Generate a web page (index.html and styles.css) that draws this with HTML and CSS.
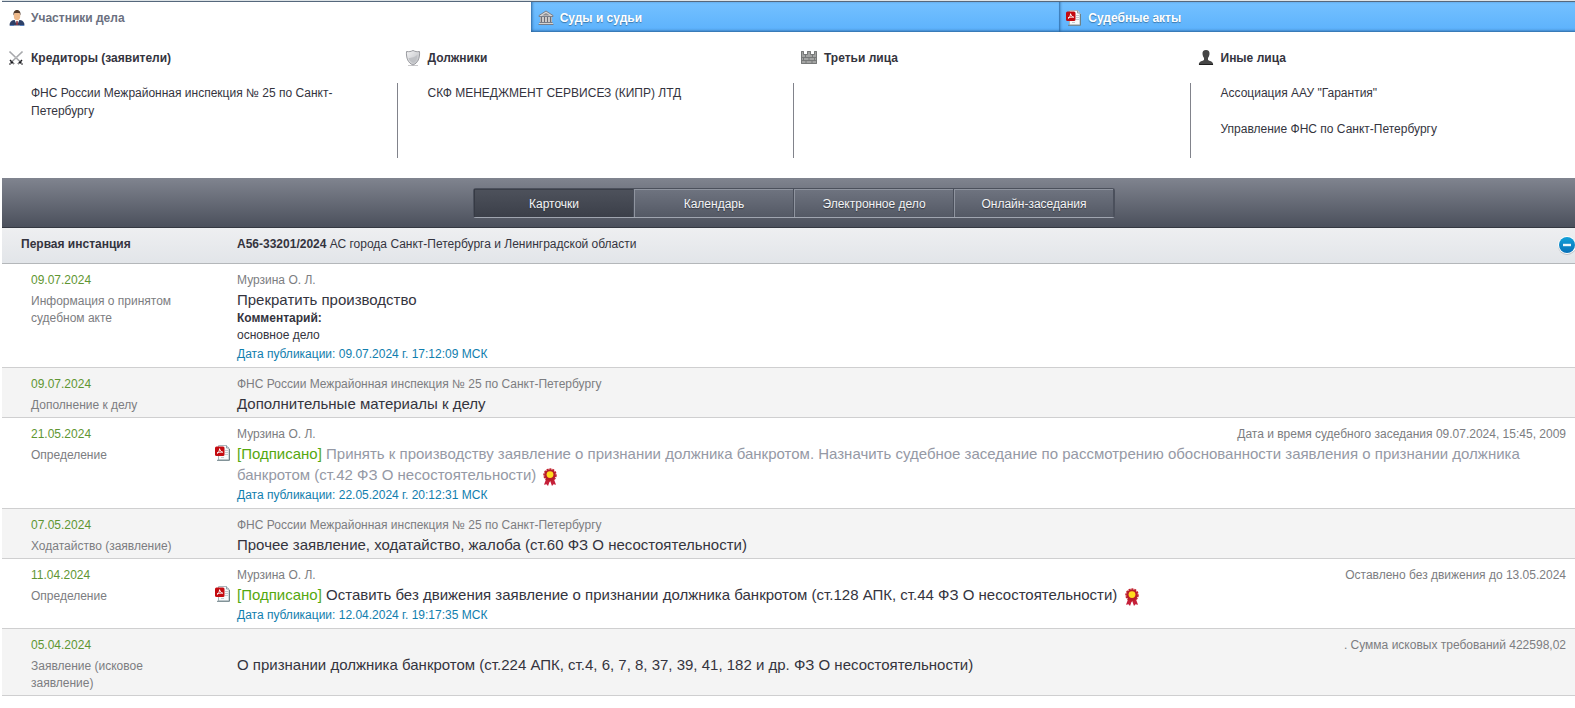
FILE: index.html
```html
<!DOCTYPE html>
<html lang="ru">
<head>
<meta charset="utf-8">
<title>А56-33201/2024</title>
<link rel="stylesheet" href="styles.css">
</head>
<body>
<svg class="defs" width="0" height="0" aria-hidden="true">
  <defs>
    <linearGradient id="steel" x1="0" y1="0" x2="1" y2="1"><stop offset="0" stop-color="#f4f4f5"/><stop offset="1" stop-color="#b9bbc0"/></linearGradient>
    <linearGradient id="blue" x1="0" y1="0" x2="0" y2="1"><stop offset="0" stop-color="#12a0d8"/><stop offset="1" stop-color="#0871b8"/></linearGradient>
  </defs>
  <symbol id="pdf" viewBox="0 0 16 16">
    <path d="M3.500 .5h8l2.500 2.500v12h-10.500z" fill="#f7f9fa" stroke="#a9b6bc"/>
    <path d="M11.500 .5v2.500h2.500" fill="#dfe6e9" stroke="#8fa0a8"/>
    <path d="M10 5.500h3M10 7.500h3M10 9.500h3M6 12.500h3" stroke="#c3cad0"/>
    <path d="M2 15.300h12.500V4" fill="none" stroke="#6d8188"/>
    <rect x="0" y="1.500" width="9.500" height="9.500" rx="1.500" fill="#c40a10"/>
    <path d="M2 8.200C3.500 7.500 4.600 5.500 4.600 3.700C4.900 5.400 6 6.700 7.700 7.200C5.700 6.900 3.700 7.200 2 8.200z" fill="none" stroke="#fff" stroke-width="1"/>
  </symbol>
  <symbol id="rosette" viewBox="0 0 14 18">
    <path d="M3.500 10L1 16.800l2.500-.6L5 18l2-5.500L9 18l1.500-1.800L13 16.800l-2.500-6.800z" fill="#c5203a"/>
    <circle cx="7" cy="7" r="6" fill="none" stroke="#c5202c" stroke-width="1.500" stroke-dasharray="2 1"/>
    <circle cx="7" cy="7" r="5.800" fill="#b71c2b"/>
    <circle cx="7" cy="6.600" r="3.400" fill="#ffdc1e"/>
  </symbol>
</svg>
<main class="page">
  <nav class="tabs">
    <button class="tab tab-active" type="button">
      <svg class="icon" viewBox="0 0 16 16"><path d="M.5 15.500c0-3.500 1.500-5 4.500-5.500h6c3 .5 4.500 2 4.500 5.500z" fill="#2d4068"/><path d="M5.500 9.500h5l-2.500 6z" fill="#fff"/><path d="M7.300 11h1.400l.5 4H6.800z" fill="#8a3440"/><path d="M1 15.500h4M11 15.500h4" stroke="#5b83c0"/><ellipse cx="8" cy="6" rx="3.200" ry="4.300" fill="#eeb98a"/><path d="M4.500 5.500C4 1.500 6 0 8 0s4 1.500 3.500 5.500L10.500 3h-5z" fill="#503828"/></svg>
      <span>Участники дела</span>
    </button>
    <button class="tab" type="button">
      <svg class="icon" viewBox="0 0 16 16"><path d="M8 1L15 5.500v1H1v-1z" fill="#d6d5d4" stroke="#7a7f8a"/><path d="M8 3l4 2.500H4z" fill="#8c8d92"/><path d="M2 7h12v6H2z" fill="#b5b3b4"/><path d="M3.500 7v6M6.500 7v6M9.500 7v6M12.500 7v6" stroke="#6d6d74"/><path d="M5 7v6M8 7v6M11 7v6" stroke="#e2e0de"/><path d="M1.500 12.500h13M.5 14.500h15" stroke="#777c87"/><path d="M1 13.500h14" stroke="#d5d3d0"/></svg>
      <span>Суды и судьи</span>
    </button>
    <button class="tab" type="button">
      <svg class="icon"><use href="#pdf"/></svg>
      <span>Судебные акты</span>
    </button>
  </nav>

  <section class="parties">
    <div class="party">
      <h2 class="party-title">
        <svg class="icon" viewBox="0 0 16 16"><path d="M1.500 1.500L13 12.500M14.500 1.500L3 12.500" stroke="#8c8e92" stroke-width="1.500"/><path d="M1.500 1l9.500 9.500M14.500 1l-9.500 9.500" stroke="#e8e8ea" stroke-width=".6"/><path d="M2 10l4 4M14 10l-4 4M4 12l-2.500 2.500M12 12l2.500 2.500" stroke="#1c1c20" stroke-width="1.500" stroke-dasharray="2 .5"/></svg>
        Кредиторы (заявители)
      </h2>
      <ul class="party-list"><li>ФНС России Межрайонная инспекция № 25 по Санкт-Петербургу</li></ul>
    </div>
    <div class="party">
      <h2 class="party-title">
        <svg class="icon" viewBox="0 0 16 16"><path d="M3 15.500h10" stroke="#c9c9cb"/><path d="M1.500 1.500C4 2 6 1.500 8 .5c2 1 4 1.500 6.500 1C15 8 13 13 8 15C3 13 1 8 1.500 1.500z" fill="url(#steel)" stroke="#9a9ba0"/><path d="M3.500 8C6 8 11 7 12.500 4.500C12.500 9 11 12 8 13C5.500 12 4 10 3.500 8z" fill="#bfc1c5"/></svg>
        Должники
      </h2>
      <ul class="party-list"><li>СКФ МЕНЕДЖМЕНТ СЕРВИСЕЗ (КИПР) ЛТД</li></ul>
    </div>
    <div class="party">
      <h2 class="party-title">
        <svg class="icon" viewBox="0 0 16 16"><path d="M0 1h3v3h3V1h4v3h3V1h3v13H0z" fill="#a3a4a3"/><path d="M.5 1.500h2v3h4v-3h3v3h4v-3h2v12H.5zM0 7.500h16M0 10.500h16M4.500 4.500v3M11.500 4.500v3M2.500 7.500v3M8 7.500v3M13.500 7.500v3M5 10.500v3M11 10.500v3" fill="none" stroke="#777979"/></svg>
        Третьи лица
      </h2>
      <ul class="party-list"></ul>
    </div>
    <div class="party">
      <h2 class="party-title">
        <svg class="icon" viewBox="0 0 16 16"><path d="M8 0c2.500 0 3.700 1.500 3.500 4C11.300 6 10.500 7 10 8v2c1 1 5 1 5.200 4.500c-3 .7-11.400 .7-14.400 0C1 11 5 11 6 10V8C5.500 7 4.700 6 4.500 4C4.300 1.500 5.500 0 8 0z" fill="#464646"/><path d="M1 14.500h14" stroke="#1f1f1f"/></svg>
        Иные лица
      </h2>
      <ul class="party-list"><li>Ассоциация ААУ "Гарантия"</li><li>Управление ФНС по Санкт-Петербургу</li></ul>
    </div>
  </section>

  <nav class="toolbar">
    <div class="switch">
      <button class="switch-item switch-on" type="button">Карточки</button>
      <button class="switch-item" type="button">Календарь</button>
      <button class="switch-item" type="button">Электронное дело</button>
      <button class="switch-item" type="button">Онлайн-заседания</button>
    </div>
  </nav>

  <header class="instance">
    <strong>Первая инстанция</strong>
    <span><strong>А56-33201/2024</strong> АС города Санкт-Петербурга и Ленинградской области</span>
    <button class="collapse" type="button" aria-label="Свернуть">
      <svg viewBox="0 0 20 20"><circle cx="10" cy="11" r="9" fill="#bfc3c7"/><circle cx="10" cy="10" r="9" fill="#fff"/><circle cx="10" cy="10" r="8" fill="url(#blue)"/><path d="M6 10h8" stroke="#eef6fb" stroke-width="2.400"/></svg>
    </button>
  </header>

  <article class="row">
    <div class="kind"><time>09.07.2024</time><p>Информация о принятом судебном акте</p></div>
    <div class="body">
      <div class="meta"><span>Мурзина О. Л.</span></div>
      <h3 class="title">Прекратить производство</h3>
      <p class="comment"><strong>Комментарий:</strong><br>основное дело</p>
      <p class="published">Дата публикации: 09.07.2024 г. 17:12:09 МСК</p>
    </div>
  </article>

  <article class="row row-alt">
    <div class="kind"><time>09.07.2024</time><p>Дополнение к делу</p></div>
    <div class="body">
      <div class="meta"><span>ФНС России Межрайонная инспекция № 25 по Санкт-Петербургу</span></div>
      <h3 class="title">Дополнительные материалы к делу</h3>
    </div>
  </article>

  <article class="row">
    <div class="kind"><time>21.05.2024</time><p>Определение</p></div>
    <svg class="icon doc"><use href="#pdf"/></svg>
    <div class="body">
      <div class="meta"><span>Мурзина О. Л.</span><span>Дата и время судебного заседания 09.07.2024, 15:45, 2009</span></div>
      <h3 class="title"><span class="signed">[Подписано]</span> <a class="visited" href="#">Принять к производству заявление о признании должника банкротом. Назначить судебное заседание по рассмотрению обоснованности заявления о признании должника банкротом (ст.42 ФЗ О несостоятельности)</a> <svg class="seal"><use href="#rosette"/></svg></h3>
      <p class="published">Дата публикации: 22.05.2024 г. 20:12:31 МСК</p>
    </div>
  </article>

  <article class="row row-alt">
    <div class="kind"><time>07.05.2024</time><p>Ходатайство (заявление)</p></div>
    <div class="body">
      <div class="meta"><span>ФНС России Межрайонная инспекция № 25 по Санкт-Петербургу</span></div>
      <h3 class="title">Прочее заявление, ходатайство, жалоба (ст.60 ФЗ О несостоятельности)</h3>
    </div>
  </article>

  <article class="row">
    <div class="kind"><time>11.04.2024</time><p>Определение</p></div>
    <svg class="icon doc"><use href="#pdf"/></svg>
    <div class="body">
      <div class="meta"><span>Мурзина О. Л.</span><span>Оставлено без движения до 13.05.2024</span></div>
      <h3 class="title"><span class="signed">[Подписано]</span> <a href="#">Оставить без движения заявление о признании должника банкротом (ст.128 АПК, ст.44 ФЗ О несостоятельности)</a> <svg class="seal"><use href="#rosette"/></svg></h3>
      <p class="published">Дата публикации: 12.04.2024 г. 19:17:35 МСК</p>
    </div>
  </article>

  <article class="row row-alt">
    <div class="kind"><time>05.04.2024</time><p>Заявление (исковое заявление)</p></div>
    <div class="body">
      <div class="meta"><span></span><span>. Сумма исковых требований 422598,02</span></div>
      <h3 class="title">О признании должника банкротом (ст.224 АПК, ст.4, 6, 7, 8, 37, 39, 41, 182 и др. ФЗ О несостоятельности)</h3>
    </div>
  </article>
</main>
</body>
</html>
```
FILE: styles.css
```css
* {
  box-sizing: border-box;
}

body {
  margin: 0;
  overflow: hidden;
  background: #fff;
  color: #34343e;
  font: 12px/17px "Liberation Sans", Arial, sans-serif;
}

h2, h3, p, ul {
  margin: 0;
  padding: 0;
  font-size: inherit;
  font-weight: inherit;
}

button {
  margin: 0;
  border: 0;
  background: none;
  color: inherit;
  font: inherit;
  cursor: pointer;
}

a {
  color: inherit;
  text-decoration: none;
}

.defs {
  position: absolute;
}

.icon {
  flex: none;
  width: 16px;
  height: 16px;
}

/* The sheet runs past the right edge of the window */
.page {
  margin: 0 -13px 0 2px;
}

.tabs {
  display: grid;
  grid-template-columns: repeat(3, 1fr);
  border-top: 1px solid #dde3e6;
}

.tab {
  display: flex;
  align-items: center;
  gap: 6px;
  height: 31px;
  padding: 2px 7px 0;
  border-top: 1px solid #56687c;
  background: linear-gradient(#74c1ff, #5cb2fc);
  box-shadow: inset 2px 0 3px -1px #2b649b, inset 0 -3px 3px -2px #2b649b;
  color: #fff;
  font-weight: bold;
  text-shadow: 0 1px 1px #3b78ac;
}

.tab-active {
  background: #fff;
  box-shadow: none;
  color: #6b7080;
  text-shadow: none;
}

.parties {
  display: grid;
  grid-template-columns: repeat(4, 1fr);
  padding: 17px 0 20px;
}

.party {
  display: flex;
  flex-direction: column;
}

.party-title {
  display: flex;
  align-items: center;
  gap: 7px;
  padding-left: 6px;
  font-weight: bold;
  line-height: 18px;
}

.party-list {
  flex: 1;
  min-height: 75px;
  margin: 16px 0 0 -2px;
  padding: 1px 60px 2px 30px;
  border-left: 1px solid #81838b;
  line-height: 18px;
  list-style: none;
}

.party:first-child .party-list {
  border-left-color: transparent;
}

.party-list li {
  margin-bottom: 18px;
}

.toolbar {
  display: flex;
  justify-content: center;
  padding: 10px 0 9px;
  border-bottom: 1px solid #343841;
  background: linear-gradient(#80848f, #4b505c);
}

.switch {
  display: grid;
  grid-template-columns: repeat(4, 160px);
  margin-right: 2px;
  border: 1px solid #4b505c;
  border-bottom-color: #a0a5b0;
  border-radius: 3px;
}

.switch-item {
  height: 28px;
  padding: 2px 0 0;
  border-left: 1px solid #8f949f;
  border-right: 1px solid #4b505c;
  box-shadow: inset 0 1px #8f949f;
  background: linear-gradient(#6f7480, #545965);
  color: #f3f4f6;
  text-shadow: 0 1px 1px #33363f;
}

.switch-on {
  border-left-color: #363a44;
  background: linear-gradient(#4e525c, #3b3f49);
  box-shadow: inset 0 1px #3b3f49;
}

.instance {
  display: flex;
  align-items: center;
  height: 36px;
  padding: 0 11px 2px 19px;
  border-bottom: 1px solid #b4b7ba;
  background: linear-gradient(#eeeff1, #e2e5e9);
}

.instance > strong {
  flex: none;
  width: 216px;
}

.collapse {
  width: 20px;
  height: 20px;
  margin-left: auto;
  padding: 0;
}

.collapse svg {
  display: block;
}

.row {
  display: flex;
  padding: 8px 22px 3px 29px;
  border-bottom: 1px solid #cfcfd0;
}

.row-alt {
  background: #f4f4f4;
}

.kind {
  flex: none;
  width: 150px;
  margin-right: 56px;
  color: #7c7d81;
}

.kind time {
  display: block;
  margin-bottom: 4px;
  color: #5f9632;
}

.doc {
  margin: 19px 6px 0 -22px;
}

.body {
  flex: 1;
}

.meta {
  display: flex;
  justify-content: space-between;
  min-height: 17px;
  color: #7c7d81;
}

.title {
  font-size: 15px;
  line-height: 21px;
}

.visited {
  color: #9599a5;
}

.signed {
  color: #55a80f;
}

.seal {
  width: 14px;
  height: 18px;
  margin: -2px 0 -2px 3px;
  vertical-align: -4px;
}

.published {
  margin: 2px 0 1px;
  color: #117eae;
}
```
